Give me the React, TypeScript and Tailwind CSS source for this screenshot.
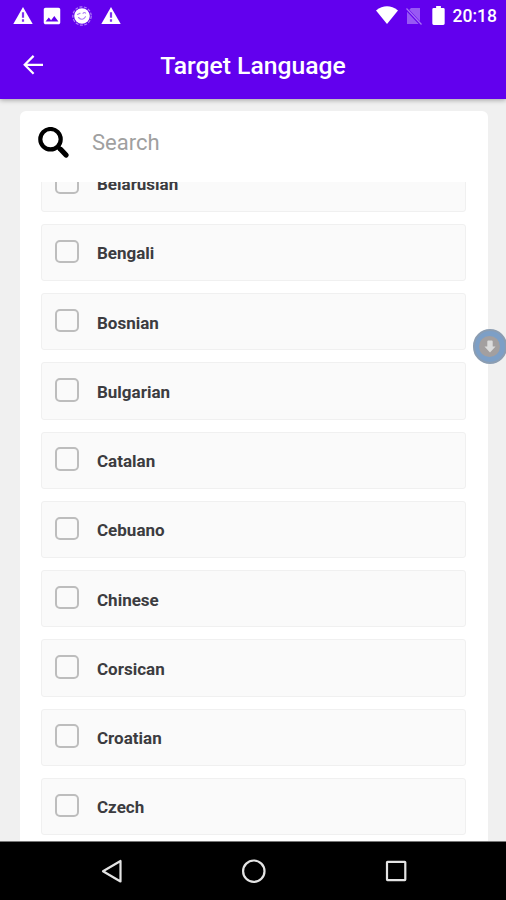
import { useState } from 'react';
import { MdImage } from 'react-icons/md';

const languages = [
  'Belarusian',
  'Bengali',
  'Bosnian',
  'Bulgarian',
  'Catalan',
  'Cebuano',
  'Chinese',
  'Corsican',
  'Croatian',
  'Czech',
];

function WarningIcon() {
  return (
    <svg width="20" height="17" viewBox="0 0 20 17">
      <path d="M10 0L19.700 17H.3z" fill="#fff" />
      <path d="M10 5.300v5.400M10 12.300v2.400" stroke="#6200ee" strokeOpacity="0.8" strokeWidth="2.2" />
    </svg>
  );
}

function StatusBar() {
  return (
    <div className="flex h-8 items-center justify-between pl-[12.500px] pr-[9px] text-white">
      <div className="flex items-center pb-[1px]">
        <WarningIcon />
        <MdImage className="ml-[8px] h-[22px] w-[22px]" />
        <svg className="ml-[8px]" width="22" height="22" viewBox="0 0 22 22">
          <circle cx="11" cy="11" r="9.2" fill="none" stroke="#fff" strokeOpacity="0.5" strokeWidth="1.2" strokeDasharray="3 1.5" />
          <circle cx="11" cy="11" r="7.8" fill="#fff" />
          <g fill="none" stroke="#6200ee" strokeOpacity="0.5" strokeWidth="1.1" strokeLinecap="round">
            <path d="M6.500 9.500l2.600-1.200M12 8.300q1.400-1.600 2.600-.2" />
            <path d="M7.500 12.500q4 3.800 7-.8" />
          </g>
        </svg>
        <span className="ml-[8px]">
          <WarningIcon />
        </span>
      </div>
      <div className="flex items-center">
        <svg className="-mt-[2px]" width="22" height="18" viewBox="0 0 22 18">
          <path d="M0 4.400Q11-4 22 4.400L11 18z" fill="#fff" />
        </svg>
        <svg className="-mt-[1px] ml-[8px]" width="16" height="18" viewBox="0 0 16 18">
          <path d="M5 1h9v13.200L3.300 2.700zM1 4.800L12.600 17H1z" fill="#fff" fillOpacity="0.35" />
          <path d="M.5 1.500L15.500 17.500" stroke="#fff" strokeOpacity="0.45" strokeWidth="1.2" />
        </svg>
        <svg className="-mt-[1px] ml-[10px]" width="13" height="19" viewBox="0 0 13 20">
          <path d="M4 0h5v2h2.500q1.500 0 1.500 1.500v15q0 1.500-1.500 1.500h-10Q0 20 0 18.500v-15Q0 2 1.500 2H4z" fill="#fff" />
        </svg>
        <span className="ml-[8px] pt-[1px] text-[17.5px] leading-none font-medium">20:18</span>
      </div>
    </div>
  );
}

function NavBar() {
  return (
    <div className="h-[59px] shrink-0 border-t border-[#777] bg-black">
      <svg width="506" height="58" viewBox="0 842 506 58" fill="none" stroke="#e4e4e4" strokeWidth="2.2">
        <path d="M103 871.200L120.500 861V881.500Z" strokeLinejoin="round" />
        <circle cx="253.800" cy="871.200" r="10.700" />
        <rect x="387" y="861.800" width="18.300" height="18.300" rx="0.500" />
      </svg>
    </div>
  );
}

export default function App() {
  const [search, setSearch] = useState('');
  const [selected, setSelected] = useState<string[]>([]);

  const filtered = languages.filter(l => l.toLowerCase().includes(search.toLowerCase()));

  const toggle = (language: string) => {
    setSelected(prev => prev.includes(language) ? prev.filter(l => l !== language) : [...prev, language]);
  };

  return (
    <div className="relative flex h-[900px] w-[506px] flex-col overflow-hidden bg-[#f0f0f0] font-['Roboto',sans-serif]">
      {/* Header */}
      <header className="h-[98.5px] shrink-0 bg-[#6200ee] text-white shadow-[0_1px_5px_rgba(0,0,0,0.35)]">
        <StatusBar />
        <div className="grid h-[66px] grid-cols-[68px_1fr_68px] items-center">
          <button className="pl-[23px]">
            <svg width="20" height="20" viewBox="0 0 20 20" fill="none" stroke="#fff" strokeWidth="2.2">
              <path d="M20 9.800H2M10.600 0.900L1.700 9.800L10.600 18.700" />
            </svg>
          </button>
          <h1 className="pt-[2px] text-center text-[24.7px] leading-none font-medium">Target Language</h1>
        </div>
      </header>

      {/* Language picker */}
      <main className="mx-[20px] mt-[12.5px] flex min-h-0 w-[468px] flex-1 flex-col rounded-t-md bg-white">
        <div className="flex h-[71px] shrink-0 items-center pl-[18px] pb-[8px]">
          <svg width="31" height="31" viewBox="0 0 31 31" fill="none" stroke="#000">
            <circle cx="12.500" cy="12.200" r="10.200" strokeWidth="4.200" />
            <path d="M20 20l2.500 2.500" strokeWidth="4.500" />
            <path d="M22.800 22.500l5.200 5.500" strokeWidth="5.200" strokeLinecap="round" />
          </svg>
          <input
            type="text"
            placeholder="Search"
            value={search}
            onChange={(e) => setSearch(e.target.value)}
            className="ml-[23px] w-[340px] text-[22px] text-gray-800 outline-none placeholder:text-[#a0a0a0]"
          />
        </div>
        <div className="min-h-0 flex-1 overflow-hidden pl-[21px]">
          <div className="-mt-[27.300px] flex flex-col gap-[12px]">
            {filtered.map((language) => (
              <label
                key={language}
                className="flex h-[57.250px] w-[425.400px] shrink-0 items-center rounded-[3px] border border-[#f0f0f0] bg-[#fafafa] pl-[13px]"
              >
                <input
                  type="checkbox"
                  checked={selected.includes(language)}
                  onChange={() => toggle(language)}
                  className="-mt-[2.500px] h-[23.500px] w-[23.500px] appearance-none rounded-[5px] border-2 border-[#bdbdbd] checked:bg-[#6200ee]"
                />
                <span className="ml-[18.500px] pt-[2.500px] text-[17px] leading-none font-bold text-[#3c3c40]">{language}</span>
              </label>
            ))}
          </div>
        </div>
      </main>

      <NavBar />

      {/* Floating download bubble */}
      <div className="absolute top-[329px] left-[472.500px] flex h-[35px] w-[34.500px] items-center justify-center rounded-full border-2 border-[#8b9db2] bg-[#7d9fc6]">
        <div className="flex h-[21px] w-[21px] items-center justify-center rounded-full bg-[#a39f9f]">
          <svg width="12" height="14" viewBox="0 0 12 14">
            <path d="M3.300 1.500q0-1 1-1h3.400q1 0 1 1V6.500H11.500L6 12.500.5 6.500H3.300z" fill="#dcdcdc" />
          </svg>
        </div>
      </div>
    </div>
  );
}
